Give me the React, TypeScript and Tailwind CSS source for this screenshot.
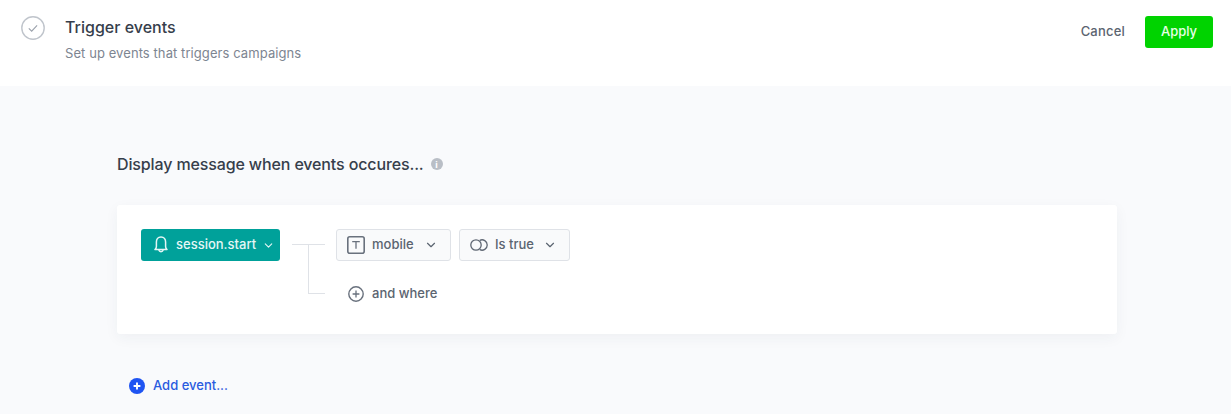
import { ChevronDown } from "lucide-react";

const font = { fontFamily: "Inter, 'Noto Sans', sans-serif" };

function Dropdown({ icon, label, width, gap }: { icon: React.ReactNode; label: string; width: string; gap: string }) {
  return (
    <button className={`flex h-8 ${width} items-center rounded-[3px] border border-[#dfe2e7] bg-[#f9fafb] pl-[10px] text-[13px] font-medium text-[#5b6470]`}>
      {icon}
      <span className="ml-[7px]">{label}</span>
      <ChevronDown size={14} strokeWidth={2} className={`${gap} text-[#5b6470]`} />
    </button>
  );
}

export default function App() {
  return (
    <div className="flex h-[414px] w-[1231px] flex-col overflow-hidden bg-[#f9fafc]" style={font}>
      {/* HEADER */}
      <header className="flex h-[86px] shrink-0 items-start justify-between bg-white pl-[21px] pr-[18px] pt-4">
        <div className="flex">
          <svg width="24" height="24" viewBox="0 0 24 24" fill="none" className="shrink-0">
            <circle cx="12" cy="12" r="11.2" stroke="#c0c5cc" strokeWidth="1.4" />
            <path d="M7.8 12.3l2.9 2.9 5.4-5.8" stroke="#9aa1ab" strokeWidth="1.1" />
          </svg>
          <div className="ml-[20px]">
            <h1 className="mt-[1px] text-[16px] leading-5 font-medium text-[#363e4b]">Trigger events</h1>
            <p className="mt-[7px] text-[13px] leading-[18px] tracking-[0.08px] text-[#7d8591]">
              Set up events that triggers campaigns
            </p>
          </div>
        </div>
        <div className="flex items-center">
          <button className="text-[13px] font-medium tracking-[0.2px] text-[#5b6470]">Cancel</button>
          <button className="ml-5 h-8 w-[68px] rounded-[3px] bg-[#00d300] text-[13px] font-medium text-[#e6ffe6]">
            Apply
          </button>
        </div>
      </header>

      {/* CONTENT */}
      <main className="ml-[117px] w-[1000px] pt-[68px]">
        <div className="flex h-5 items-center">
          <h2 className="text-[16px] font-medium tracking-[-0.13px] text-[#363e4b]">
            Display message when events occures...
          </h2>
          <span className="ml-[7px] flex h-3 w-3 items-center justify-center rounded-full bg-[#b9bec6] text-[9px] leading-none font-bold text-white">
            i
          </span>
        </div>

        <section className="mt-[31px] flex h-[129px] rounded-[3px] bg-white pl-6 pt-6 shadow-[0_4px_14px_rgba(40,50,70,0.05)]">
          <button className="flex h-8 w-[139px] items-center rounded-[3px] bg-[#00a19a] pl-[13px] text-[13px] font-medium text-[#e4f6f5]">
            <svg width="14" height="18" viewBox="0 0 14 18" fill="none" stroke="currentColor" strokeWidth="1.5" className="shrink-0">
              <path d="M7 1C3.9 1 2.4 3.2 2.4 6v4.6c0 1.5-.6 2.3-1.4 3h12c-.8-.7-1.4-1.5-1.4-3V6C11.6 3.2 10.1 1 7 1z" strokeLinejoin="round" />
              <path d="M4.8 14a2.3 2.3 0 0 0 4.4 0" />
            </svg>
            <span className="ml-[8px]">session.start</span>
            <ChevronDown size={13} strokeWidth={2} className="ml-[6px]" />
          </button>

          {/* CONNECTOR */}
          <div className="ml-3 mt-[15px] flex h-[50px] w-[33px] flex-col">
            <div className="h-px w-[33px] bg-[#dfe2e7]" />
            <div className="ml-4 h-[49px] w-[17px] border-b border-l border-[#dfe2e7]" />
          </div>

          <div className="ml-[11px] flex flex-col">
            <div className="flex gap-2">
              <Dropdown
                width="w-[115px]"
                gap="ml-[10px]"
                label="mobile"
                icon={
                  <svg width="18" height="18" viewBox="0 0 18 18" fill="none" stroke="#69717d" className="shrink-0">
                    <rect x="0.8" y="0.8" width="16.4" height="16.4" rx="2" strokeWidth="1.6" />
                    <path d="M5.2 5.6h7.6M9 5.6v7.2" strokeWidth="1.3" />
                  </svg>
                }
              />
              <Dropdown
                width="w-[111px]"
                gap="ml-[9px]"
                label="Is true"
                icon={
                  <svg width="18" height="12" viewBox="0 0 18 12" fill="none" stroke="#5f6773" strokeWidth="1.3" className="shrink-0">
                    <circle cx="6" cy="6" r="5.2" />
                    <path d="M9.8 1.3a5.2 5.2 0 1 1 0 9.4" />
                  </svg>
                }
              />
            </div>
            <button className="ml-3 mt-[23px] flex items-center text-[13px] font-medium text-[#5b6470]">
              <svg width="16" height="16" viewBox="0 0 16 16" fill="none" stroke="#69717d" className="shrink-0">
                <circle cx="8" cy="8" r="7.2" strokeWidth="1.4" />
                <path d="M8 4.6v6.8M4.6 8h6.8" strokeWidth="1.3" />
              </svg>
              <span className="ml-2">and where</span>
            </button>
          </div>
        </section>

        <button className="ml-3 mt-[42px] flex items-center text-[13px] font-medium text-[#2a5be0]">
          <svg width="16" height="16" viewBox="0 0 16 16" className="shrink-0">
            <circle cx="8" cy="8" r="8" fill="#1f54f2" />
            <path d="M8 4.6v6.8M4.6 8h6.8" stroke="#fff" strokeWidth="1.9" />
          </svg>
          <span className="ml-2">Add event...</span>
        </button>
      </main>
    </div>
  );
}
